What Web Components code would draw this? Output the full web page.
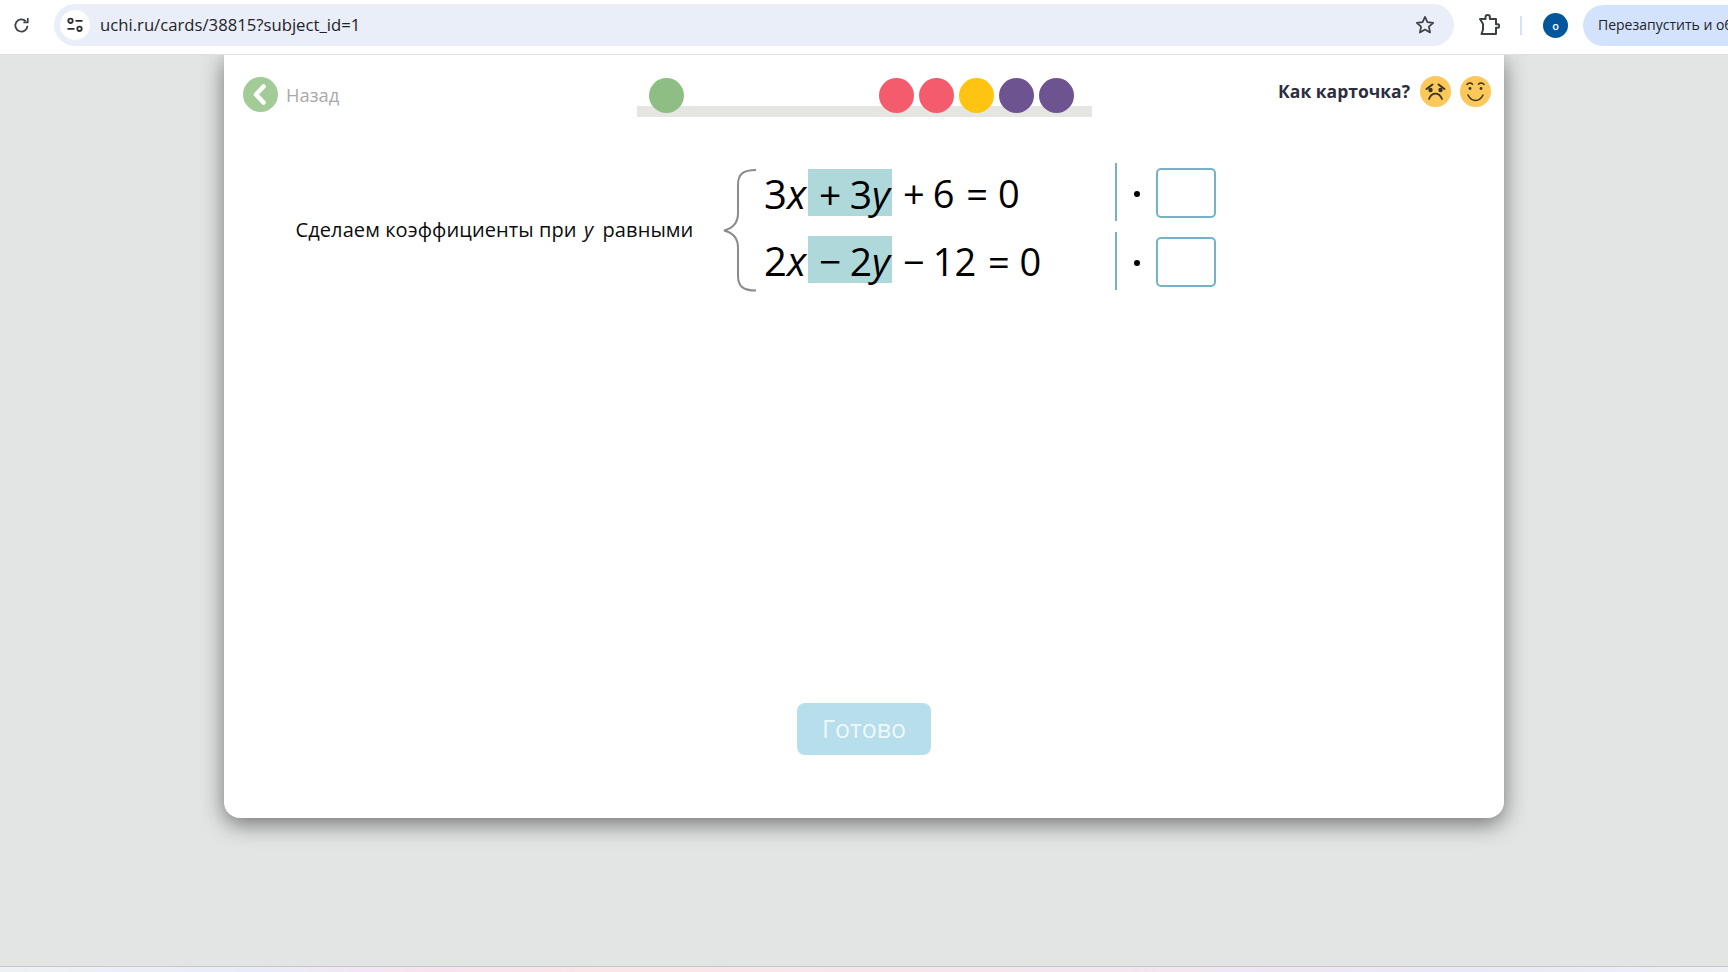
<!DOCTYPE html>
<html lang="ru"><head><meta charset="utf-8"><title>uchi.ru</title>
<style>
html,body{margin:0;height:100%;overflow:hidden;background:#e3e5e4;font-family:"Open Sans",sans-serif}
</style></head><body>
<app-root></app-root>
<script>
function def(name, html){
  customElements.define(name, class extends HTMLElement{
    constructor(){super();this.attachShadow({mode:'open'}).innerHTML=html;}
  });
}
def('browser-toolbar',`<style>
:host{display:flex;align-items:center;box-sizing:border-box;background:#fff;border-bottom:1px solid #dfe1e0;overflow:hidden;flex:none;position:relative;z-index:2;height:55px;padding-bottom:4px;padding-left:13px}
.url{display:flex;align-items:center;width:1400px;height:42px;margin-left:24px;background:#e9eef8;border-radius:21px;box-sizing:border-box;padding:0 19px 0 6px;flex:none}
.site{width:30px;height:30px;border-radius:50%;background:#fff;display:flex;align-items:center;justify-content:center;flex:none}
.txt{margin-left:10px;flex:1;font:16.7px "Open Sans",sans-serif;color:#1f2328;margin-top:-1px}
.rl{flex:none;display:block}
.ext{margin-left:24px;flex:none}
.sep{width:2px;height:19px;background:#d3e3fd;margin-left:20px;flex:none}
.av{width:25px;height:25px;border-radius:50%;background:#01579b;color:#fff;font:600 11px "Open Sans",sans-serif;display:flex;align-items:center;justify-content:center;margin-left:21px;flex:none}
.chip{height:41px;border-radius:21px 0 0 21px;background:#d3e3fd;margin-left:15px;padding-left:15px;display:flex;align-items:center;font:14px "Open Sans",sans-serif;color:#1f2328;flex:none;width:145px;box-sizing:border-box;overflow:hidden}
.chip span{white-space:nowrap;overflow:hidden;width:130px;flex:none;margin-top:-2px}
</style>
<svg class="rl" width="17" height="17" viewBox="0 0 16 16" fill="none" stroke="#3f4347" stroke-width="1.700"><path d="M13.600 8.200A5.700 5.700 0 1 1 12 4"/><path d="M13.900 1v4.100H9.800" stroke-width="1.600"/></svg>
<div class="url"><div class="site"><svg width="18" height="16" viewBox="0 0 18 16" fill="none" stroke="#2b2f33" stroke-width="1.800"><circle cx="4.500" cy="3.800" r="2.200"/><path d="M9.500 3.800h7M1.500 11.800h7"/><circle cx="13.500" cy="11.800" r="2.200"/></svg></div>
<div class="txt">uchi.ru/cards/38815?subject_id=1</div>
<svg width="20" height="20" viewBox="0 0 20 20" fill="none" stroke="#3c4043" stroke-width="1.700" stroke-linejoin="round"><path d="M10 1.800l2.400 5.400 5.800.6-4.300 3.900 1.200 5.800L10 14.600l-5.100 2.900 1.200-5.800L1.800 7.800l5.800-.6z"/></svg></div>
<svg class="ext" width="22" height="22" viewBox="0 0 22 22" fill="none" stroke="#3c4043" stroke-width="2" stroke-linejoin="round"><path d="M2 5h5.500V3.200a2.200 2.200 0 0 1 4.400 0V5H18v5.300h1.600a1.500 1.500 0 0 1 0 3.400H18V20H3.500L5 15.500V10L2 5z"/></svg>
<div class="sep"></div><div class="av">о</div><div class="chip"><span>Перезапустить и обновить</span></div>`);

def('back-link',`<style>
:host{display:flex;align-items:center;gap:8px;font:18.300px "Open Sans",sans-serif;color:#a9a9a9}
svg{display:block}
</style>
<svg width="35" height="35" viewBox="0 0 35 35"><circle cx="17.500" cy="17.500" r="17.500" fill="#a3cb98"/><path d="M20.500 9.500L13 17.500l7.500 8" fill="none" stroke="#fff" stroke-width="4.600" stroke-linecap="round" stroke-linejoin="round"/></svg><span>Назад</span>`);

def('progress-dot',`<style>
:host{display:block;width:35px;height:35px;border-radius:50%;background:var(--c)}
</style>`);

def('progress-track',`<style>
:host{display:grid;width:455px;height:40px;flex:none;margin-left:-5px}
.bar{grid-area:1/1;align-self:end;height:11px;background:#e5e6e1}
.dots{grid-area:1/1;display:flex;gap:5px;height:35px;padding:0 18px 0 12px;align-self:start;margin-top:1px}
.sp{flex:1}
</style><div class="bar"></div><div class="dots">
<progress-dot style="--c:#8fbe85"></progress-dot><div class="sp"></div>
<progress-dot style="--c:#f45b6c"></progress-dot><progress-dot style="--c:#f45b6c"></progress-dot><progress-dot style="--c:#fec411"></progress-dot><progress-dot style="--c:#6d5490"></progress-dot><progress-dot style="--c:#6d5490"></progress-dot></div>`);

def('card-rating',`<style>
:host{display:flex;align-items:center;gap:8px;font:700 17.500px "Open Sans",sans-serif;color:#2d2d42}
span{margin-right:2px;margin-top:-10px}
svg{display:block;margin-top:-8px}
</style><span>Как карточка?</span>
<svg width="31" height="31" viewBox="0 0 31 31" fill="none" stroke="#3a3320" stroke-width="1.700" stroke-linecap="round"><circle cx="15.500" cy="15.500" r="15.500" fill="#fcc85a" stroke="none"/><path d="M9 23c1.400-3.600 3.800-5.400 6.500-5.400S20.600 19.400 22 23"/><path d="M6.500 13L12.500 8.500M24.500 13L18.500 8.500" stroke-width="2"/><circle cx="10.500" cy="14" r="2.200" fill="#3a3320" stroke="none"/><circle cx="20.500" cy="14" r="2.200" fill="#3a3320" stroke="none"/></svg>
<svg width="31" height="31" viewBox="0 0 31 31" fill="none" stroke="#3a3320" stroke-width="1.500" stroke-linecap="round" style="margin-left:1px"><circle cx="15.500" cy="15.500" r="15.500" fill="#fcc85a" stroke="none"/><path d="M8 19c2 4 4.800 5.500 7.500 5.500s5.500-1.500 7.500-5.500"/><path d="M7 8.500c1.500-1.800 4-1.800 5.500-.3M18.500 8.200c1.500-1.500 4-1.500 5.500.3"/><circle cx="10" cy="12.500" r="1.400" fill="#3a3320" stroke="none"/><circle cx="21" cy="12.500" r="1.400" fill="#3a3320" stroke="none"/></svg>`);

def('card-header',`<style>
:host{display:grid;grid-template-columns:1fr auto 1fr;align-items:start;padding:22px 13px 0 19px;flex:none}
.r{justify-self:end;padding-top:7px}
</style><back-link></back-link><progress-track></progress-track><card-rating class="r"></card-rating>`);

def('answer-box',`<style>
:host{display:block;width:60px;height:50px;box-sizing:border-box;border:2px solid #74b3c7;border-radius:5px;background:#fff}
</style>`);

def('equation-row',`<style>
:host{display:flex;align-items:center;height:58px;font:40px "Open Sans",sans-serif;color:#000;white-space:nowrap}
.eq{display:flex;align-items:center;width:392px;flex:none;padding-left:41px;box-sizing:border-box;margin-bottom:var(--lift)}
.a,.rest{padding-top:2px}
.hl{display:inline-flex;align-items:center;justify-content:flex-end;width:84px;height:47px;box-sizing:border-box;padding:2px 2px 0 0;background:#aed8da;flex:none;margin:0 11px 0 2px;font-size:39px;word-spacing:-1.500px}
.rest{font-size:38px}
.line{width:2px;height:58px;background:#74b3c7;flex:none;margin:-2px 17px 0 0}
.dot{width:6px;height:6px;border-radius:50%;background:#000;flex:none;margin:2px 16px 0 0}
</style><div class="eq"><span class="a"><slot name="a"></slot></span><span class="hl"><slot name="b"></slot></span><span class="rest"><slot name="c"></slot></span></div><div class="line"></div><div class="dot"></div><answer-box></answer-box>`);

def('equation-system',`<style>
:host{display:flex;flex-direction:column;gap:11px;position:relative;flex:none}
svg{position:absolute;left:-2px;top:5px}
</style><svg width="38" height="123" viewBox="0 0 38 123" fill="none" stroke="#8b8b8b" stroke-width="2"><path d="M35 1C22 1 17 5 17 16v28c0 9-4 15-14 17.500 10 2.500 14 8 14 17v28c0 11 5 15 18 15"/></svg><slot></slot>`);

def('task-line',`<style>
:host{display:flex;align-items:flex-start;padding:47px 0 0 72px}
.t{font:20px "Open Sans",sans-serif;color:#0c0c0c;width:427px;flex:none;padding-top:52px;white-space:nowrap;letter-spacing:.09px;margin-left:-.5px;margin-right:.5px}
i{margin:0 4px 0 2px}
</style><div class="t">Сделаем коэффициенты при <i>y</i> равными</div><slot></slot>`);

def('done-button',`<style>
:host{display:flex;align-items:center;justify-content:center;width:134px;height:52px;border-radius:8px;background:#b6deeb;color:#eef8fb;font:500 25px "Open Sans",sans-serif;box-sizing:border-box;padding-bottom:2px}
</style><slot></slot>`);

def('lesson-card',`<style>
:host{display:flex;flex-direction:column;width:1280px;height:763px;margin:0 auto;background:#fff;border-radius:0 0 16px 16px;box-shadow:0 6px 22px rgba(0,0,0,.5);flex:none}
.sp{flex:1}
.f{display:flex;justify-content:center;padding-bottom:63px}
</style><card-header></card-header><slot></slot><div class="sp"></div><div class="f"><done-button>Готово</done-button></div>`);

def('app-root',`<style>
:host{display:flex;flex-direction:column;height:972px;overflow:hidden;background:#e3e5e4}
main{flex:1;display:flex;flex-direction:column;min-height:0}
.strip{height:6px;flex:none;border-top:1px solid #c8c6c8;box-sizing:border-box;background:linear-gradient(90deg,#eef1f3 0,#e8ecf8 15%,#f7e3ef 25%,#f9e6e8 35%,#f4e6ee 60%,#e9e8f6 85%,#eef0f4 100%);position:relative;z-index:1}
.gap{flex:1}
i{font-style:italic}
.ws{word-spacing:-2px;margin-right:2px}
</style><browser-toolbar></browser-toolbar><main><lesson-card><task-line><equation-system>
<equation-row style="--lift:2px"><span slot="a">3<i>x</i></span><span slot="b">+ 3<i>y</i></span><span slot="c"><span class="ws">+ 6</span> = 0</span></equation-row>
<equation-row style="--lift:5px"><span slot="a">2<i>x</i></span><span slot="b">− 2<i>y</i></span><span slot="c"><span class="ws">− 12</span> = 0</span></equation-row>
</equation-system></task-line></lesson-card><div class="gap"></div></main><div class="strip"></div>`);
</script></body></html>
